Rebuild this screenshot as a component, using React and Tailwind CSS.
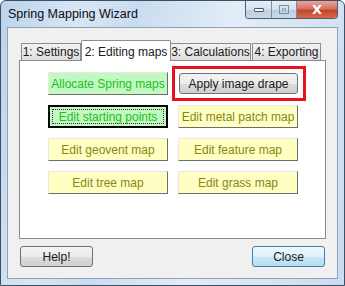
import React from "react";

const font = { fontFamily: '"Liberation Sans", Arial, sans-serif' };

// flat coloured buttons on the editing tab
const MapButton = ({ label, kind, focused }) => {
  const colours =
    kind === "green"
      ? "bg-[#c2f9c2] text-[#1fbf1f]"
      : "bg-[#ffffc4] text-[#878710]";
  if (focused) {
    return (
      <div className={`h-[23px] w-[120px] border-2 border-black p-[2px] ${colours}`}>
        <div className="flex h-full w-full items-center justify-center whitespace-nowrap border border-dotted border-[#333]">
          {label}
        </div>
      </div>
    );
  }
  return (
    <div
      className={`flex h-[23px] w-[120px] items-center justify-center whitespace-nowrap border border-t-[#e8e8e8] border-l-[#e8e8e8] border-r-[#6d6d6d] border-b-[#6d6d6d] ${colours}`}
    >
      {label}
    </div>
  );
};

const VistaButton = ({ label, isDefault, className = "" }) => (
  <div
    className={`flex h-[21px] items-center justify-center whitespace-nowrap rounded-[3px] border text-[#1a1a1a] ${
      isDefault
        ? "border-[#3c7fb1] bg-[linear-gradient(#eef8fd_0%,#e1f2fb_50%,#cbe8f7_51%,#b7dcf0_100%)]"
        : "border-[#707070] bg-[linear-gradient(#f3f3f3_0%,#ebebeb_50%,#dddddd_51%,#cfcfcf_100%)]"
    } ${className}`}
  >
    {label}
  </div>
);

const tabs = ["1: Settings", "2: Editing maps", "3: Calculations", "4: Exporting"];

const App = () => {
  return (
    <div
      className="relative flex h-[286px] w-[345px] flex-col overflow-hidden rounded-t-[6px] border border-[#3b4f66] bg-[linear-gradient(100deg,#bcd3ea_0%,#d8e6f3_20%,#c9dcef_35%,#e2edf7_60%,#cadcef_100%)] text-[12px]"
      style={font}
    >
      {/* title bar */}
      <div className="flex h-[26px] shrink-0 items-start justify-between">
        <div className="whitespace-nowrap pl-[7px] pt-[5px] text-[12.5px] leading-[16px] text-[#0a0a1a]">
          Spring Mapping Wizard
        </div>
        <div className="mr-[6px] flex h-[18px] overflow-hidden rounded-b-[4px] border border-t-0 border-[#4b5d72]">
          <div className="flex w-[26px] items-center justify-center border-r border-[#7d8ea3] bg-[linear-gradient(#e6eef7_0%,#d5e1ee_50%,#bccde0_51%,#c9d9ea_100%)]">
            <div className="h-[4px] w-[10px] rounded-[1px] border border-[#4a5868] bg-white" />
          </div>
          <div className="flex w-[25px] items-center justify-center border-r border-[#7d8ea3] bg-[linear-gradient(#e6eef7_0%,#d5e1ee_50%,#bccde0_51%,#c9d9ea_100%)]">
            <div className="flex h-[9px] w-[10px] items-center justify-center border border-[#7d8ea3]">
              <div className="h-[3px] w-[4px] border border-[#9aa8b8]" />
            </div>
          </div>
          <div className="flex w-[40px] items-center justify-center bg-[linear-gradient(#e8a598_0%,#d47462_45%,#c1442c_55%,#d86a4f_100%)]">
            <span className="text-[13px] font-bold leading-none text-white" style={{ fontFamily: '"DejaVu Sans", sans-serif' }}>
              X
            </span>
          </div>
        </div>
      </div>

      {/* client area */}
      <div className="mx-[6px] mb-[6px] flex flex-1 flex-col border border-[#8fa1b5] bg-[#f0f0f0] pl-[11px] pr-[12px] pt-[11px]">
        {/* tab strip */}
        <div className="flex h-[21px] items-end pl-[2px]">
          {tabs.map((t, i) =>
            i === 1 ? (
              <div
                key={t}
                className="relative z-10 -mb-px flex h-[21px] w-[90px] items-start justify-center whitespace-nowrap rounded-t-[2px] border border-b-0 border-[#898c95] bg-white pt-[2px] text-[#1a1a1a]"
              >
                {t}
              </div>
            ) : (
              <div
                key={t}
                className={`flex h-[17px] items-center justify-center whitespace-nowrap border border-b-0 border-[#898c95] bg-[linear-gradient(#f2f2f2,#dedede)] text-[#1a1a1a] ${
                  i === 0 ? "w-[60px]" : i === 2 ? "-ml-px w-[81px]" : "ml-px w-[69px]"
                }`}
              >
                {t}
              </div>
            )
          )}
        </div>

        {/* tab page */}
        <div className="h-[179px] w-[307px] border border-[#898c95] bg-white pl-[28px] pt-[11px]">
          <div className="grid grid-cols-[120px_120px] gap-x-[10px] gap-y-[10px]">
            <MapButton label="Allocate Spring maps" kind="green" />
            <div className="relative">
              <VistaButton label="Apply image drape" className="ml-px mt-px h-[21px] w-[119px]" />
              <div className="absolute left-[-6px] top-[-6px] h-[35px] w-[134px] border-[3px] border-[#e8121e]" />
            </div>
            <MapButton label="Edit starting points" kind="green" focused />
            <MapButton label="Edit metal patch map" kind="yellow" />
            <MapButton label="Edit geovent map" kind="yellow" />
            <MapButton label="Edit feature map" kind="yellow" />
            <MapButton label="Edit tree map" kind="yellow" />
            <MapButton label="Edit grass map" kind="yellow" />
          </div>
        </div>

        {/* dialog buttons */}
        <div className="mt-[7px] flex justify-between pl-px">
          <VistaButton label="Help!" className="w-[73px]" />
          <VistaButton label="Close" isDefault className="w-[73px]" />
        </div>
      </div>
    </div>
  );
};

export default App;
